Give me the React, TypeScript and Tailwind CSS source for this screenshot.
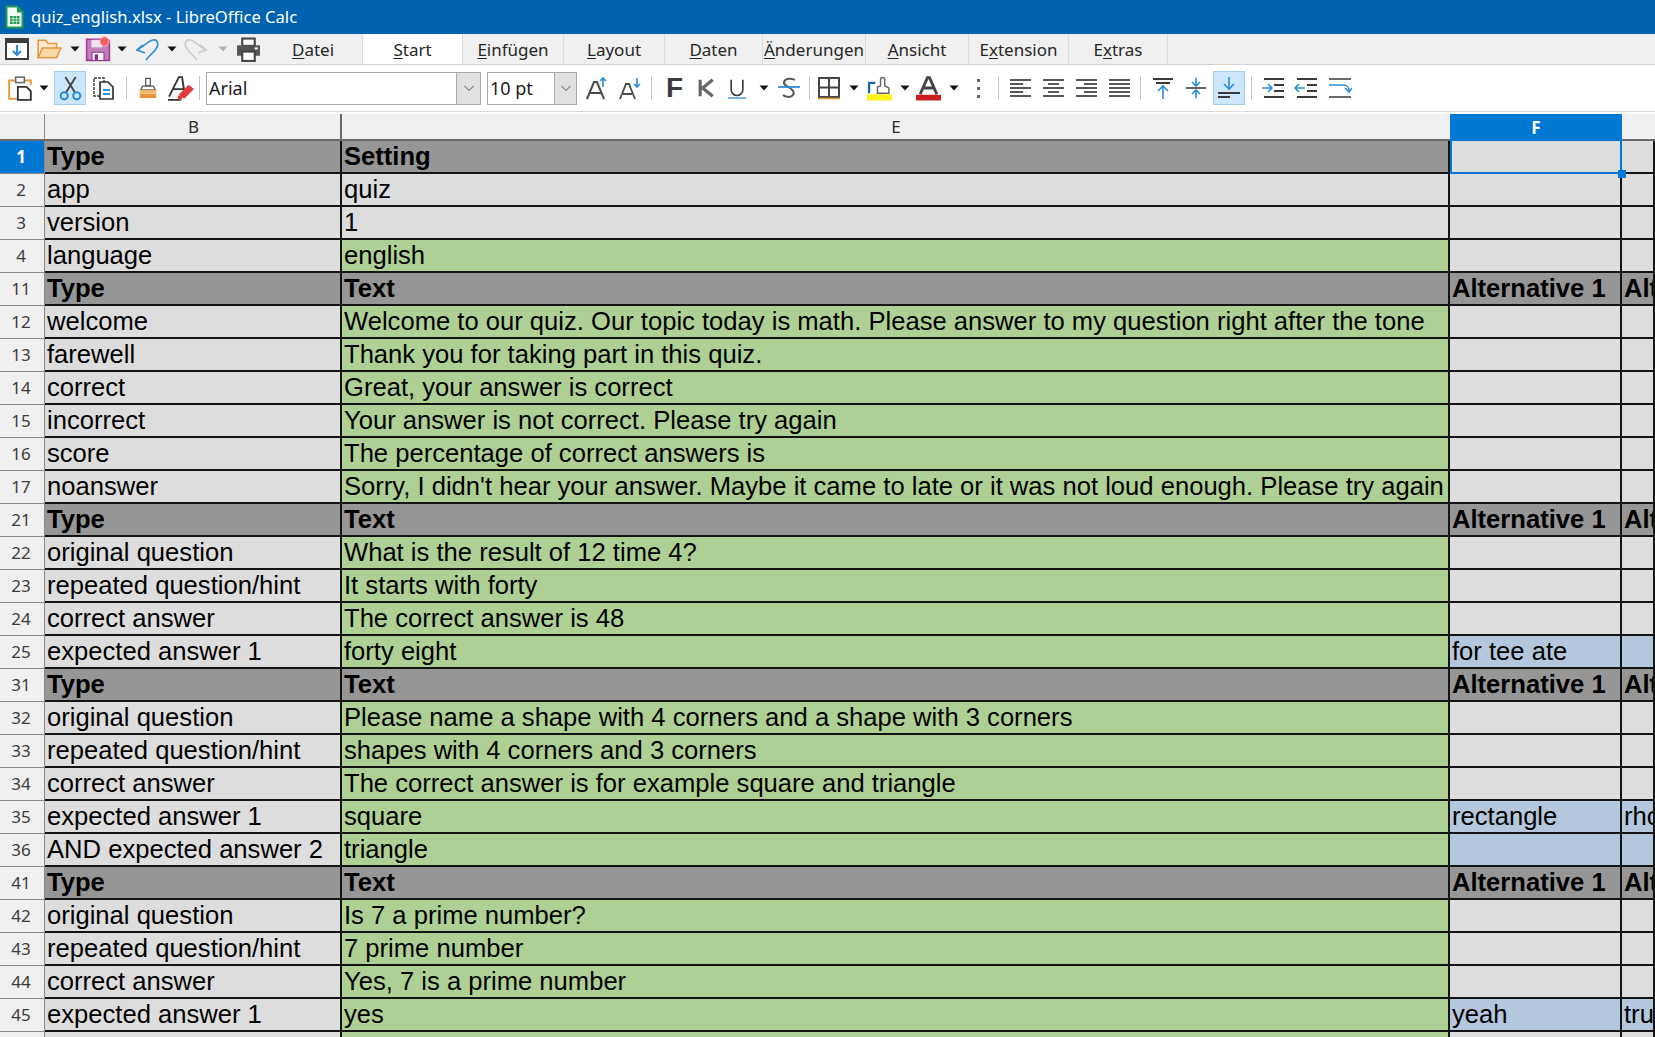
import type { ReactNode } from "react";

type Row = {
  n: number;
  b?: string;
  e?: string;
  f?: string;
  g?: string;
  head?: boolean;
  plain?: boolean;
  blue?: boolean;
};

const altHead = { f: "Alternative 1", g: "Alternative 2" };

const rows: Row[] = [
  { n: 1, b: "Type", e: "Setting", head: true },
  { n: 2, b: "app", e: "quiz", plain: true },
  { n: 3, b: "version", e: "1", plain: true },
  { n: 4, b: "language", e: "english" },
  { n: 11, b: "Type", e: "Text", head: true, ...altHead },
  { n: 12, b: "welcome", e: "Welcome to our quiz. Our topic today is math. Please answer to my question right after the tone" },
  { n: 13, b: "farewell", e: "Thank you for taking part in this quiz." },
  { n: 14, b: "correct", e: "Great, your answer is correct" },
  { n: 15, b: "incorrect", e: "Your answer is not correct. Please try again" },
  { n: 16, b: "score", e: "The percentage of correct answers is" },
  { n: 17, b: "noanswer", e: "Sorry, I didn't hear your answer. Maybe it came to late or it was not loud enough. Please try again" },
  { n: 21, b: "Type", e: "Text", head: true, ...altHead },
  { n: 22, b: "original question", e: "What is the result of 12 time 4?" },
  { n: 23, b: "repeated question/hint", e: "It starts with forty" },
  { n: 24, b: "correct answer", e: "The correct answer is 48" },
  { n: 25, b: "expected answer 1", e: "forty eight", f: "for tee ate", blue: true },
  { n: 31, b: "Type", e: "Text", head: true, ...altHead },
  { n: 32, b: "original question", e: "Please name a shape with 4 corners and a shape with 3 corners" },
  { n: 33, b: "repeated question/hint", e: "shapes with 4 corners and 3 corners" },
  { n: 34, b: "correct answer", e: "The correct answer is for example square and triangle" },
  { n: 35, b: "expected answer 1", e: "square", f: "rectangle", g: "rhombus", blue: true },
  { n: 36, b: "AND expected answer 2", e: "triangle", blue: true },
  { n: 41, b: "Type", e: "Text", head: true, ...altHead },
  { n: 42, b: "original question", e: "Is 7 a prime number?" },
  { n: 43, b: "repeated question/hint", e: "7 prime number" },
  { n: 44, b: "correct answer", e: "Yes, 7 is a prime number" },
  { n: 45, b: "expected answer 1", e: "yes", f: "yeah", g: "true", blue: true },
  { n: 46 },
];

const tabs: { pre?: string; key: string; post: string; w: string; active?: boolean }[] = [
  { key: "D", post: "atei", w: "w-[99px]" },
  { key: "S", post: "tart", w: "w-[100px]", active: true },
  { key: "E", post: "infügen", w: "w-[101px]" },
  { key: "L", post: "ayout", w: "w-[101px]" },
  { key: "D", post: "aten", w: "w-[98px]" },
  { key: "Ä", post: "nderungen", w: "w-[103px]" },
  { key: "A", post: "nsicht", w: "w-[103px]" },
  { pre: "E", key: "x", post: "tension", w: "w-[100px]" },
  { pre: "E", key: "x", post: "tras", w: "w-[99px]" },
];

function Caret({ gray }: { gray?: boolean }) {
  return (
    <svg width="10" height="6" viewBox="0 0 10 6">
      <path d="M0.5 0.5h9L5 5.5z" fill={gray ? "#b4b4b4" : "#111"} />
    </svg>
  );
}

function Icon({ children, size = 24 }: { children: ReactNode; size?: number }) {
  return (
    <svg width={size} height={size} viewBox="0 0 24 24" fill="none">
      {children}
    </svg>
  );
}

function Slot({ w, children, active }: { w: string; children?: ReactNode; active?: boolean }) {
  return (
    <div
      className={`flex h-[34px] shrink-0 items-center justify-center ${w} ${
        active ? "border border-[#a5cfee] bg-[#cce6fb]" : ""
      }`}
    >
      {children}
    </div>
  );
}

function Sep({ ml }: { ml: string }) {
  return <div className={`h-[24px] w-px shrink-0 bg-[#c4c4c4] ${ml}`} />;
}

function Lines({ rows: list }: { rows: [number, number, number][] }) {
  return (
    <Icon>
      {list.map(([x1, x2, y], i) => (
        <path key={i} d={`M${x1} ${y}H${x2}`} stroke="#3a3a3a" strokeWidth="1.7" />
      ))}
    </Icon>
  );
}

function DropDown({ w, text, textW }: { w: string; text: string; textW: string }) {
  return (
    <div className={`flex h-[33px] shrink-0 border border-[#ababab] bg-white ${w}`}>
      <div className={`flex items-center pl-[2px] text-[18px] text-[#1c1c1c] ${textW}`}>{text}</div>
      <div className="flex flex-1 items-center justify-center border-l border-[#ababab] bg-[#e1e1e1]">
        <svg width="12" height="7" viewBox="0 0 12 7">
          <path d="M1.5 1L6 5.5 10.5 1" stroke="#555" strokeWidth="1" fill="none" />
        </svg>
      </div>
    </div>
  );
}

function TitleBar() {
  return (
    <div className="flex h-[34px] items-center bg-[#0063b1]">
      <svg className="ml-[5px]" width="19" height="24" viewBox="0 0 19 24">
        <path d="M0.5 0.5h12l6 6v17H0.5z" fill="#1f9a50" />
        <path d="M2.5 2.5h9.5v5h4.5v14h-14z" fill="#f4fbf5" />
        <rect x="5" y="11" width="9.5" height="8" fill="#1f9a50" />
        <path d="M5 13.7h9.5M5 16.3h9.5M8.2 11v8M11.4 11v8" stroke="#d8f1dd" strokeWidth="0.8" />
      </svg>
      <span className="ml-[7px] text-[16.6px] text-white">quiz_english.xlsx - LibreOffice Calc</span>
    </div>
  );
}

function MenuRow() {
  return (
    <div className="flex h-[31px] items-stretch border-b border-[#d4d4d4] bg-[#f0f0f0]">
      <div className="flex w-[264px] shrink-0 items-center">
        <div className="ml-[5px]">
          <Icon>
            <rect x="1" y="2" width="22" height="20" fill="#fff" stroke="#3c3c3c" strokeWidth="2" />
            <rect x="1" y="2" width="22" height="4" fill="#3c3c3c" />
            <path d="M12 8v10M8 14l4 4 4-4" stroke="#2f8fd6" strokeWidth="2.2" />
          </Icon>
        </div>
        <div className="ml-[7px]">
          <Icon size={26}>
            <path d="M2 20V4h7l2 3h8v4" fill="#fdeacf" stroke="#e8963a" strokeWidth="1.4" />
            <path d="M2 20l4-9h17l-4 9z" fill="#fbd9a9" stroke="#e8963a" strokeWidth="1.4" />
          </Icon>
        </div>
        <div className="ml-[8px]">
          <Caret />
        </div>
        <div className="ml-[5px]">
          <Icon size={26}>
            <path d="M1.5 3h19.500l1.500 1.500v18h-21z" fill="#c27fbc" stroke="#a33b9c" strokeWidth="1.5" />
            <rect x="6" y="3.500" width="10" height="7" fill="#f0e2ef" />
            <rect x="6.500" y="15" width="11" height="7.500" fill="#f7eff6" stroke="#7f2f7a" strokeWidth="0.8" />
            <rect x="9" y="17" width="3" height="5" fill="#7f2f7a" />
            <circle cx="18" cy="5" r="4.200" fill="#f06060" stroke="#fbb" strokeWidth="0.8" />
          </Icon>
        </div>
        <div className="ml-[6px]">
          <Caret />
        </div>
        <div className="ml-[8px]">
          <Icon>
            <path d="M8 8l-6 5 8 3" stroke="#2f8fd6" strokeWidth="1.7" />
            <path d="M2 13C8 10 13 4 18 3c5-1 6 5 3 9-3 4-7 7-10 11" stroke="#2f8fd6" strokeWidth="1.7" />
          </Icon>
        </div>
        <div className="ml-[8px]">
          <Caret />
        </div>
        <div className="ml-[7px]">
          <Icon>
            <path d="M16 8l6 5-8 3" stroke="#cdcdcd" strokeWidth="1.7" />
            <path d="M22 13C16 10 11 4 6 3 1 2 0 8 3 12c3 4 7 7 10 11" stroke="#cdcdcd" strokeWidth="1.7" />
          </Icon>
        </div>
        <div className="ml-[10px]">
          <Caret gray />
        </div>
        <div className="ml-[8px]">
          <Icon size={25}>
            <rect x="6" y="1.500" width="12" height="7" fill="#fff" stroke="#444" strokeWidth="2" />
            <rect x="1" y="8" width="22" height="10" fill="#555" />
            <rect x="6" y="14" width="12" height="9" fill="#fff" stroke="#444" strokeWidth="2" />
            <rect x="18" y="10" width="3" height="2" fill="#fff" />
          </Icon>
        </div>
      </div>
      {tabs.map((t, i) => (
        <div
          key={i}
          className={`flex shrink-0 items-center justify-center border-r border-[#dcdcdc] pt-[1px] text-[17px] text-[#262626] ${t.w} ${
            t.active ? "bg-white" : "bg-[#f0f0f0]"
          }`}
        >
          {t.pre}
          <span className="underline underline-offset-2">{t.key}</span>
          {t.post}
        </div>
      ))}
    </div>
  );
}

function Toolbar() {
  return (
    <div className="flex h-[47px] items-center border-b border-[#d9d9d9] bg-white">
      <Slot w="ml-[6px] w-[27px]">
        <Icon size={26}>
          <path d="M8 5H2v17h7M16 5h6v4" stroke="#e49b3f" strokeWidth="1.8" />
          <rect x="8" y="2" width="8" height="5" fill="#fff" stroke="#666" strokeWidth="1.4" />
          <path d="M10 11h8l4 4v8H10z" fill="#fff" stroke="#333" strokeWidth="1.7" />
        </Icon>
      </Slot>
      <div className="ml-[6px]">
        <Caret />
      </div>
      <Slot active w="ml-[5px] w-[32px]">
        <Icon size={25}>
          <path d="M7 1l9.500 15M17 1L7.500 16" stroke="#444" strokeWidth="1.800" />
          <circle cx="6" cy="19" r="3.400" fill="#cce6fb" stroke="#2f8fd6" strokeWidth="2" />
          <circle cx="18" cy="19" r="3.400" fill="#cce6fb" stroke="#2f8fd6" strokeWidth="2" />
        </Icon>
      </Slot>
      <Slot w="ml-[5px] w-[24px]">
        <Icon>
          <path d="M3 2h10v18H3z" fill="#fff" stroke="#3c3c3c" strokeWidth="1.5" strokeDasharray="3 1" />
          <path d="M9 6h8l5 5v12H9z" fill="#fff" stroke="#333" strokeWidth="1.7" />
          <path d="M12 14h7M12 18h7" stroke="#2f8fd6" strokeWidth="1.8" />
        </Icon>
      </Slot>
      <Sep ml="ml-[11px]" />
      <Slot w="ml-[10px] w-[22px]">
        <Icon>
          <rect x="9.500" y="1.500" width="5" height="8" fill="#fff" stroke="#555" strokeWidth="1.4" />
          <path d="M6 10h12l2 4H4z" fill="#fff" stroke="#555" strokeWidth="1.300" />
          <rect x="3" y="14" width="18" height="3.500" fill="#f4b46a" />
          <rect x="3" y="18" width="18" height="5" fill="#e8963a" />
        </Icon>
      </Slot>
      <Slot w="ml-[9px] w-[26px]">
        <Icon size={26}>
          <path d="M1 20L10 2h3l2 13M5 13h9M0 23h12" stroke="#333" strokeWidth="1.700" />
          <path d="M10 18l9-9 5 4-9 9z" fill="#e23b3b" />
          <circle cx="11" cy="21" r="2.200" fill="#e23b3b" />
        </Icon>
      </Slot>
      <Sep ml="ml-[5px]" />
      <DropDown w="ml-[6px] w-[275px]" text="Arial" textW="w-[249px]" />
      <DropDown w="ml-[6px] w-[90px]" text="10 pt" textW="w-[66px]" />
      <Slot w="ml-[8px] w-[24px]">
        <Icon size={26}>
          <path d="M2 23L9 6h3l7 17M5 17h11" stroke="#4a4a4a" strokeWidth="2" />
          <path d="M18 11V2M15 5l3-3 3 3" stroke="#2f8fd6" strokeWidth="1.700" />
        </Icon>
      </Slot>
      <Slot w="ml-[9px] w-[24px]">
        <Icon>
          <path d="M2 23L8 8h3l6 15M5 18h9" stroke="#4a4a4a" strokeWidth="1.800" />
          <path d="M19 2v9M16 8l3 3 3-3" stroke="#2f8fd6" strokeWidth="1.700" />
        </Icon>
      </Slot>
      <Sep ml="ml-[9px]" />
      <div className="ml-[14px] w-[16px] text-center font-['Liberation_Sans',sans-serif] text-[28px] leading-none font-bold text-[#3c3c3c]">
        F
      </div>
      <Slot w="ml-[14px] w-[20px]">
        <Icon>
          <path d="M5 2v20M20 2L8 12l12 10" stroke="#666" strokeWidth="3.800" />
        </Icon>
      </Slot>
      <Slot w="ml-[11px] w-[20px]">
        <Icon>
          <path d="M5 2v12a7 7 0 0014 0V2" stroke="#3c3c3c" strokeWidth="2" />
          <path d="M1 24h22" stroke="#2f8fd6" strokeWidth="1.600" />
        </Icon>
      </Slot>
      <div className="ml-[12px]">
        <Caret />
      </div>
      <Slot w="ml-[8px] w-[24px]">
        <Icon>
          <path d="M18 4c-3-2-10-2-11 2-1 3 3 4 6 6 3 2 5 4 3 7-2 3-8 2-10 0" stroke="#555" strokeWidth="2" />
          <path d="M1 11h22" stroke="#2f8fd6" strokeWidth="1.800" />
        </Icon>
      </Slot>
      <Sep ml="ml-[8px]" />
      <Slot w="ml-[6px] w-[25px]">
        <Icon>
          <path d="M2 2h20v19H2zM12 2v19M2 11.500h20" stroke="#444" strokeWidth="2" />
          <path d="M1 22.500h22" stroke="#e49b3f" strokeWidth="1.600" />
        </Icon>
      </Slot>
      <div className="ml-[8px]">
        <Caret />
      </div>
      <Slot w="ml-[8px] w-[25px]">
        <Icon size={26}>
          <path d="M2 17V7h6" stroke="#1e63b4" strokeWidth="2.200" />
          <path d="M10 17v-6l3-1V4a2 2 0 014 0v6l4 2v5z" fill="#fff" stroke="#666" strokeWidth="1.400" />
          <rect x="0" y="18" width="24" height="6" fill="#fdf21a" />
        </Icon>
      </Slot>
      <div className="ml-[8px]">
        <Caret />
      </div>
      <Slot w="ml-[6px] w-[25px]">
        <Icon size={26}>
          <path d="M4 18L11 2h2l7 16M7.500 12h9" stroke="#444" strokeWidth="2.800" />
          <rect x="0" y="18.500" width="24" height="5.500" fill="#cc2020" />
        </Icon>
      </Slot>
      <div className="ml-[8px]">
        <Caret />
      </div>
      <div className="ml-[18px] flex w-[4px] flex-col gap-[5px]">
        <div className="h-[3px] w-[3px] bg-[#666]" />
        <div className="h-[3px] w-[3px] bg-[#666]" />
        <div className="h-[3px] w-[3px] bg-[#666]" />
      </div>
      <Sep ml="ml-[17px]" />
      <Slot w="ml-[10px] w-[24px]">
        <Lines rows={[[1, 22, 4], [1, 14, 8], [1, 22, 12], [1, 14, 16], [1, 22, 20]]} />
      </Slot>
      <Slot w="ml-[9px] w-[24px]">
        <Lines rows={[[1, 22, 4], [6, 17, 8], [1, 22, 12], [6, 17, 16], [1, 22, 20]]} />
      </Slot>
      <Slot w="ml-[9px] w-[24px]">
        <Lines rows={[[1, 22, 4], [9, 22, 8], [1, 22, 12], [9, 22, 16], [1, 22, 20]]} />
      </Slot>
      <Slot w="ml-[9px] w-[24px]">
        <Lines rows={[[1, 22, 4], [1, 22, 8], [1, 22, 12], [1, 22, 16], [1, 22, 20]]} />
      </Slot>
      <Sep ml="ml-[8px]" />
      <Slot w="ml-[10px] w-[24px]">
        <Icon>
          <path d="M2 3h20M5 7h14" stroke="#3a3a3a" strokeWidth="2" />
          <path d="M12 23V10M7 15l5-5 5 5" stroke="#2f8fd6" strokeWidth="1.600" />
        </Icon>
      </Slot>
      <Slot w="ml-[9px] w-[24px]">
        <Icon>
          <path d="M2 12h20" stroke="#3a3a3a" strokeWidth="1.600" />
          <path d="M12 2v8M8 6l4 4 4-4M12 22v-8M8 18l4-4 4 4" stroke="#2f8fd6" strokeWidth="1.600" />
        </Icon>
      </Slot>
      <Slot active w="ml-[5px] w-[32px]">
        <Icon>
          <path d="M1 17h22M1 21h12" stroke="#3a3a3a" strokeWidth="2" />
          <path d="M12 1v12M7 8l5 5 5-5" stroke="#2f8fd6" strokeWidth="1.600" />
        </Icon>
      </Slot>
      <Sep ml="ml-[6px]" />
      <Slot w="ml-[9px] w-[24px]">
        <Icon>
          <path d="M3 3h20M13 9h10M13 15h10M3 21h20" stroke="#3a3a3a" strokeWidth="2" />
          <path d="M1 12h10M7 8l4 4-4 4" stroke="#2f8fd6" strokeWidth="1.600" />
        </Icon>
      </Slot>
      <Slot w="ml-[9px] w-[24px]">
        <Icon>
          <path d="M3 3h20M13 9h10M13 15h10M3 21h20" stroke="#3a3a3a" strokeWidth="2" />
          <path d="M11 12H1M5 8l-4 4 4 4" stroke="#2f8fd6" strokeWidth="1.600" />
        </Icon>
      </Slot>
      <Slot w="ml-[10px] w-[24px]">
        <Icon>
          <path d="M1 3h22M1 21h22" stroke="#3a3a3a" strokeWidth="1.600" />
          <path d="M1 9h14c5 0 6 2 6 6M17 12l4 4 3-4" stroke="#2f8fd6" strokeWidth="1.600" />
        </Icon>
      </Slot>
    </div>
  );
}

function ColumnHeader() {
  return (
    <div className="mt-[2px] flex h-[27px] border-b-2 border-[#6a6a6a] bg-[#f0f0f0] text-[17px] text-[#2a2a2a]">
      <div className="w-[45px] shrink-0 border-r border-[#8a8a8a]" />
      <div className="flex w-[297px] shrink-0 items-center justify-center border-r-2 border-[#6a6a6a] pl-[2px]">B</div>
      <div className="flex w-[1108px] shrink-0 items-center justify-center">E</div>
      <div className="-mb-[2px] flex w-[172px] shrink-0 items-center justify-center bg-[#0078d4] font-bold text-white">F</div>
      <div className="flex-1" />
    </div>
  );
}

function SheetRow({ row }: { row: Row }) {
  const selected = row.n === 1;
  const bg = row.head ? "bg-[#969696]" : "bg-[#dddddd]";
  const eBg = row.head ? "bg-[#969696]" : row.plain ? "bg-[#dddddd]" : "bg-[#afd095]";
  const altBg = selected ? "bg-[#dddddd]" : row.head ? "bg-[#969696]" : row.blue ? "bg-[#b4c7dc]" : "bg-[#dddddd]";
  const cell = `h-full overflow-hidden whitespace-nowrap border-r-2 border-b-2 border-[#141414] pl-[2px] leading-[31px] ${
    row.head ? "font-bold" : ""
  }`;
  return (
    <div className="flex h-[33px] text-[25.6px] text-black">
      <div
        className={`flex h-full w-[45px] shrink-0 items-center justify-center border-r border-b border-[#8a8a8a] pr-[2px] font-['Noto_Sans',sans-serif] text-[17px] ${
          selected ? "bg-[#0078d4] font-bold text-white" : "bg-[#f0f0f0] text-[#3c3c3c]"
        }`}
      >
        {row.n}
      </div>
      <div className={`w-[297px] shrink-0 ${bg} ${cell}`}>{row.b}</div>
      <div className={`w-[1108px] shrink-0 ${eBg} ${cell}`}>{row.e}</div>
      <div className={`w-[172px] shrink-0 ${altBg} ${cell}`}>{row.f}</div>
      <div className={`flex-1 ${altBg} ${cell} border-r-0`}>{row.g}</div>
    </div>
  );
}

export default function App() {
  return (
    <div className="relative h-[1037px] w-[1655px] overflow-hidden bg-white font-['Noto_Sans',sans-serif]">
      <TitleBar />
      <MenuRow />
      <Toolbar />
      <ColumnHeader />
      <div className="font-['Liberation_Sans',Arial,sans-serif]">
        {rows.map((r) => (
          <SheetRow key={r.n} row={r} />
        ))}
      </div>
      {/* cell cursor on F1 */}
      <div className="pointer-events-none absolute top-[141px] left-[1450px] h-[33px] w-[172px] border-2 border-t-0 border-[#0078d4]" />
      <div className="absolute top-[170px] left-[1618px] h-[8px] w-[8px] bg-[#0078d4]" />
    </div>
  );
}
